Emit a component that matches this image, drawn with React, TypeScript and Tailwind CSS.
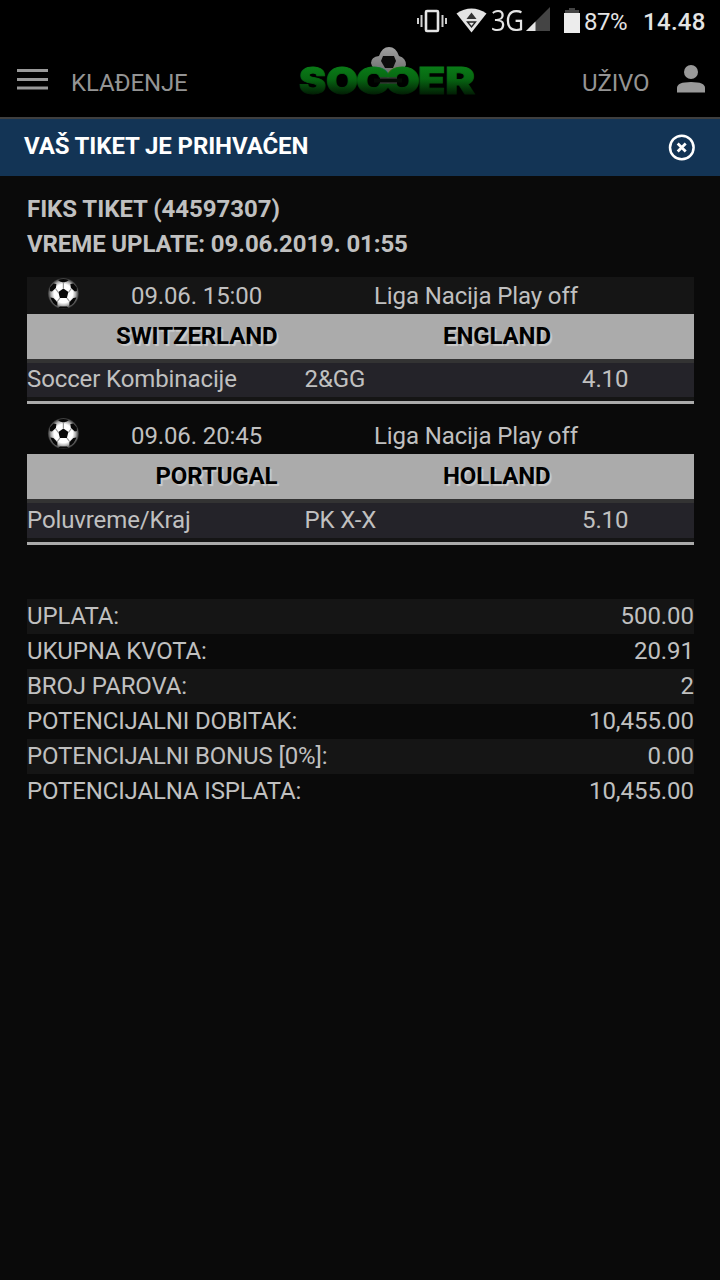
type Match = {
  time: string;
  league: string;
  home: string;
  away: string;
  game: string;
  tip: string;
  odds: string;
};

const matches: Match[] = [
  {
    time: "09.06. 15:00",
    league: "Liga Nacija Play off",
    home: "SWITZERLAND",
    away: "ENGLAND",
    game: "Soccer Kombinacije",
    tip: "2&GG",
    odds: "4.10",
  },
  {
    time: "09.06. 20:45",
    league: "Liga Nacija Play off",
    home: "PORTUGAL",
    away: "HOLLAND",
    game: "Poluvreme/Kraj",
    tip: "PK X-X",
    odds: "5.10",
  },
];

const summary = [
  { label: "UPLATA:", value: "500.00" },
  { label: "UKUPNA KVOTA:", value: "20.91" },
  { label: "BROJ PAROVA:", value: "2" },
  { label: "POTENCIJALNI DOBITAK:", value: "10,455.00" },
  { label: "POTENCIJALNI BONUS [0%]:", value: "0.00" },
  { label: "POTENCIJALNA ISPLATA:", value: "10,455.00" },
];

function StatusBar() {
  return (
    <div className="flex h-11 items-start tracking-normal text-[#e4e4e4]">
      <svg className="ml-[417px] mt-[9px] shrink-0" width="30" height="24" viewBox="0 0 30 24">
        <rect x="9" y="2" width="12" height="20" rx="1" fill="none" stroke="#e4e4e4" strokeWidth="2.6" />
        <path d="M1 9v6M4.500 6v12M25.500 6v12M29 9v6" stroke="#d0d0d0" strokeWidth="2" />
      </svg>
      <svg className="ml-[9px] mt-[8px] shrink-0" width="31" height="25" viewBox="0 0 31 25">
        <path d="M.5 5.500Q15.500-4.500 30.500 5.500L15.500 24.500Z" fill="#e4e4e4" />
        <path d="M15.500 4.500l5 6.500h-10Z" fill="#333" />
        <path d="M11.500 14h8l-4 5Z" fill="none" stroke="#222" strokeWidth="1.400" />
      </svg>
      <span className="ml-[4px] mt-[2px] w-[34px] font-['Open_Sans',sans-serif] text-[30px] leading-[36px]">
        <span className="inline-block origin-left scale-x-[0.86] tracking-[-0.5px]">3G</span>
      </span>
      <svg className="ml-[1px] mt-[7px] shrink-0" width="24" height="25" viewBox="0 0 24 25">
        <path d="M24 0v24H0Z" fill="#444" />
        <path d="M9.500 14.500V24H0Z" fill="#e4e4e4" />
      </svg>
      <svg className="ml-[14px] mt-[8px] shrink-0" width="17" height="25" viewBox="0 0 17 25">
        <path d="M5 0h6v2h4v4H1V2h4Z" fill="#444" />
        <path d="M0 5h16v20H0Z" fill="#ececec" />
      </svg>
      <span className="ml-[3px] mt-[4px] w-[59px] text-[24px] leading-[36px] tracking-[-0.5px]">87%</span>
      <span className="mt-[4px] text-[24px] font-medium leading-[36px] tracking-[0.3px]">14.48</span>
    </div>
  );
}

function Logo() {
  return (
    <svg width="182" height="68" viewBox="0 0 182 68">
      <defs>
        <linearGradient id="green" gradientUnits="userSpaceOnUse" x1="0" y1="21" x2="0" y2="52">
          <stop offset="0" stopColor="#0a7d18" />
          <stop offset="0.45" stopColor="#076712" />
          <stop offset="1" stopColor="#011603" />
        </linearGradient>
        <linearGradient id="silver" x1="0" y1="0" x2="0" y2="1">
          <stop offset="0" stopColor="#a0a0a0" />
          <stop offset="1" stopColor="#666" />
        </linearGradient>
      </defs>
      <path
        d="M75 19q0-6 8-7q3-9 10-9t10 9q7 2 7 9q-2 5-8 6l-9 6-9-6q-8-2-9-8Z"
        fill="url(#silver)"
      />
      <path d="M87 12h11l2 5-3 7h-8l-4-7Z" fill="#0c0c0c" />
      <g
        fontFamily="Inter, 'Liberation Sans', sans-serif"
        fontWeight="900"
        fontSize="37"
        fill="url(#green)"
        stroke="url(#green)"
        strokeWidth="0.800"
      >
        <text x="3" y="49.500" textLength="27" lengthAdjust="spacingAndGlyphs">S</text>
        <text x="30" y="49.500" textLength="32" lengthAdjust="spacingAndGlyphs">O</text>
        <text x="60" y="49.500" textLength="34" lengthAdjust="spacingAndGlyphs">C</text>
        <text transform="translate(124 0) scale(-1 1)" y="49.500" textLength="34" lengthAdjust="spacingAndGlyphs">C</text>
        <text x="122" y="49.500" textLength="57" lengthAdjust="spacingAndGlyphs">ER</text>
      </g>
      <path d="M78 36.500h28" stroke="#040a04" strokeWidth="4" />
      <path d="M84 34h17M84 39h17" stroke="#4a4f4a" strokeWidth="1" />
    </svg>
  );
}

function Header() {
  return (
    <header className="h-[119px] border-b-2 border-[#3f3f3f] bg-black">
      <StatusBar />
      <div className="flex items-start text-2xl tracking-[-0.13px] text-[#949494]">
        <svg className="ml-[17px] mt-[25px]" width="31" height="22" viewBox="0 0 31 22">
          <path d="M0 1.500h31M0 10.500h31M0 19h31" stroke="#999" strokeWidth="3.200" />
        </svg>
        <span className="ml-[23px] mt-[21px] w-[225px] leading-[36px]">KLAĐENJE</span>
        <Logo />
        <span className="ml-[104px] mt-[21px] w-[95px] leading-[36px]">UŽIVO</span>
        <svg className="mt-[20px]" width="28" height="30" viewBox="0 0 28 30">
          <circle cx="14" cy="8" r="7" fill="#999" />
          <path d="M0 28.500V24q0-6 14-6t14 6v4.500Z" fill="#999" />
        </svg>
      </div>
    </header>
  );
}

function SoccerBall() {
  return (
    <svg className="blur-[0.6px]" width="34" height="32" viewBox="0 0 34 32">
      <defs>
        <radialGradient id="ball">
          <stop offset="0.600" stopColor="#fff" />
          <stop offset="0.800" stopColor="#aaa" />
          <stop offset="1" stopColor="#2a2a2a" />
        </radialGradient>
      </defs>
      <g transform="translate(.4 .5)">
        <circle cx="16" cy="15" r="15.500" fill="url(#ball)" />
        <g fill="#080808">
          <path d="M11 13.500l5-3.500 5 3.500-1.500 6h-7Z" />
          <path d="M10.500 1.500q5.500-2 11 0l-2 1.500-3.500 1-3.500-1Z" />
          <path d="M2.500 9l3.500-4 3 .5-.5 4-4 3.500-2-.5Z" />
          <path d="M29.500 9l-3.500-4-3 .5.5 4 4 3.500 2-.5Z" />
          <path d="M3 19l3 .5 4 4v4q-5-2-7-8.500Z" />
          <path d="M29 19l-3 .5-4 4v4q5-2 7-8.500Z" />
          <path d="M12.500 28h7l1.500 1.500q-5 1-10 0Z" />
        </g>
        <path
          d="M16 4v6M11 14l-3-4M21 14l3-4M12.500 19.500l-3 4M19.500 19.500l3 4"
          fill="none"
          stroke="#999"
          strokeWidth="1.200"
        />
      </g>
    </svg>
  );
}

function MatchRow({ match, striped }: { match: Match; striped: boolean }) {
  return (
    <div className={striped ? "mb-[13px] bg-[#151515]" : ""}>
      <div className="flex h-[37px] items-start leading-[39px]">
        <div className="ml-5 mt-px w-[84px]">
          <SoccerBall />
        </div>
        <span className="w-[243px]">{match.time}</span>
        <span>{match.league}</span>
      </div>
      <div className="flex h-[45px] bg-[#ababab] font-bold leading-[44px] text-black [text-shadow:2px_2px_1px_#ccc]">
        <span className="w-[250.5px] text-right">{match.home}</span>
        <span className="ml-[165.5px]">{match.away}</span>
      </div>
      <div
        className={`flex border-t-4 border-[#333] bg-[#242329] ${striped ? "h-[38px] leading-[33px]" : "h-[39px] leading-[35px]"}`}
      >
        <span className="w-[277.5px]">{match.game}</span>
        <span className="w-[277.5px]">{match.tip}</span>
        <span>{match.odds}</span>
      </div>
      <div className="h-[7px] border-b-[3px] border-[#ababab] bg-[#151515]" />
    </div>
  );
}

export default function App() {
  return (
    <div className="h-[1280px] w-[720px] overflow-hidden bg-[#0a0a0a] font-[Roboto,sans-serif] text-2xl tracking-[-0.11px] text-[#c0c0c0]">
      <Header />
      <div className="flex h-[57px] items-start justify-between bg-[#133455] pl-6 pr-[25px] text-white">
        <span className="mt-[9px] font-bold leading-[36px]">VAŠ TIKET JE PRIHVAĆEN</span>
        <svg className="mt-[15px]" width="27" height="27" viewBox="0 0 27 27">
          <circle cx="13.800" cy="13.500" r="11.800" fill="none" stroke="#fff" strokeWidth="2.500" />
          <path d="M9.700 9.500l8 8M17.700 9.500l-8 8" stroke="#fff" strokeWidth="2.800" />
        </svg>
      </div>
      <main className="pl-[27px] pr-[26px] pt-4">
        <div className="font-bold leading-[35px]">
          <p className="tracking-[-0.04px]">FIKS TIKET (44597307)</p>
          <p>VREME UPLATE: 09.06.2019. 01:55</p>
        </div>
        <div className="mt-[15px]">
          {matches.map((match, i) => (
            <MatchRow key={match.home} match={match} striped={i % 2 === 0} />
          ))}
        </div>
        <div className="mt-[54px] leading-[35px] tracking-[-0.14px]">
          {summary.map((row) => (
            <div key={row.label} className="flex justify-between odd:bg-[#151515]">
              <span>{row.label}</span>
              <span className="tracking-[-0.05px]">{row.value}</span>
            </div>
          ))}
        </div>
      </main>
    </div>
  );
}
